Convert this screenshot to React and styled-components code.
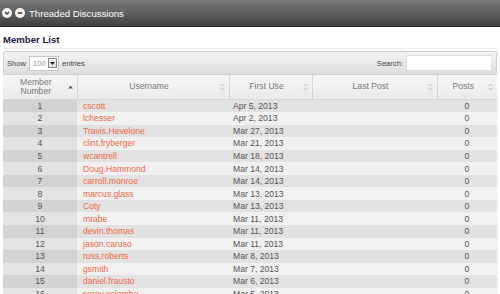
import React from "react";
import styled, { createGlobalStyle } from "styled-components";

const Global = createGlobalStyle`
  html, body { margin: 0; padding: 0; background: #fff; overflow: hidden; }
  body { font-family: "Liberation Sans", Arial, sans-serif; }
`;

const TitleBar = styled.div`
  height: 26px;
  background: linear-gradient(#7a7a7a, #5a5a5a 60%, #3e3e3e);
  display: flex;
  align-items: center;
  padding-left: 2px;
  gap: 3px;
  border-bottom: 1px solid #2e2e2e;
`;

const RoundIcon = styled.span`
  width: 10px;
  height: 10px;
  border-radius: 50%;
  background: #f4f4f4;
  display: inline-flex;
  align-items: center;
  justify-content: center;
  svg { display: block; }
`;

const TitleText = styled.span`
  color: #fff;
  font-size: 9.6px;
  margin-left: 1px;
`;

const Content = styled.div`
  padding: 0 3px;
`;

const Heading = styled.div`
  font-weight: bold;
  font-size: 9.6px;
  color: #1c2236;
  padding: 7px 0 3px 0;
  border-bottom: 1px solid #ececec;
  margin-bottom: 2px;
`;

const Toolbar = styled.div`
  height: 22px;
  border: 1px solid #d2d2d2;
  border-radius: 2px 2px 0 0;
  background: linear-gradient(#f4f4f4, #dedede);
  display: flex;
  align-items: center;
  justify-content: space-between;
  padding: 0 4px 0 3px;
  font-size: 7.6px;
  color: #444;
`;

const Group = styled.div`
  display: flex;
  align-items: center;
  gap: 3px;
`;

const Select = styled.div`
  width: 30px;
  height: 15px;
  background: #fff;
  border: 1px solid #c6c6c6;
  display: flex;
  align-items: center;
  justify-content: space-between;
  padding-left: 3px;
  box-sizing: border-box;
  color: #999;
  font-size: 7.6px;
`;

const SelBtn = styled.span`
  width: 9px;
  height: 10px;
  margin-right: 1px;
  border: 1px solid #888;
  background: linear-gradient(#fff, #ddd);
  box-sizing: border-box;
  display: flex;
  align-items: center;
  justify-content: center;
`;

const SearchBox = styled.div`
  width: 86px;
  height: 16px;
  background: #fff;
  border: 1px solid #e0e0e0;
  box-sizing: border-box;
`;

const Table = styled.table`
  width: 100%;
  border-collapse: collapse;
  table-layout: fixed;
  font-size: 8.6px;
`;

const Th = styled.th`
  height: 24px;
  padding: 0 12px 0 4px;
  font-weight: normal;
  color: #777;
  font-size: 8.6px;
  line-height: 9.5px;
  background: linear-gradient(#f6f6f6, #ebebeb);
  border-right: 1px solid #d4d4d4;
  border-bottom: 1px solid #d8d8d8;
  position: relative;
  text-align: center;
  &:last-child { border-right: none; }
`;

const SortIcon = styled.span`
  position: absolute;
  right: 4px;
  top: 50%;
  transform: translateY(-50%);
  color: #999;
  display: flex;
`;

const Tr = styled.tr`
  height: 12.55px;
  background: ${(p) => (p.$odd ? "#e2e2e2" : "#f1f1f1")};
`;

const Td = styled.td`
  padding: 0 4px;
  white-space: nowrap;
  overflow: hidden;
  color: #555;
  text-align: ${(p) => p.$align || "left"};
  background: ${(p) => (p.$sorted ? (p.$odd ? "#d3d3d3" : "#e3e3e3") : "transparent")};
`;

const Link = styled.a`
  color: #f2683f;
  text-decoration: none;
  padding-left: 2px;
`;

const rows = [
  ["cscott", "Apr 5, 2013"],
  ["lchesser", "Apr 2, 2013"],
  ["Travis.Hevelone", "Mar 27, 2013"],
  ["clint.fryberger", "Mar 21, 2013"],
  ["wcantrell", "Mar 18, 2013"],
  ["Doug.Hammond", "Mar 14, 2013"],
  ["carroll.monroe", "Mar 14, 2013"],
  ["marcus.glass", "Mar 13, 2013"],
  ["Coty", "Mar 13, 2013"],
  ["mrabe", "Mar 11, 2013"],
  ["devin.thomas", "Mar 11, 2013"],
  ["jason.caruso", "Mar 11, 2013"],
  ["russ.roberts", "Mar 8, 2013"],
  ["gsmith", "Mar 7, 2013"],
  ["daniel.frausto", "Mar 6, 2013"],
  ["corey.colombo", "Mar 5, 2013"],
];

const Both = () => (
  <svg width="5" height="7" viewBox="0 0 5 7">
    <path d="M0.5 2.6 L2.5 0.6 L4.5 2.6 M0.5 4.4 L2.5 6.4 L4.5 4.4" fill="none" stroke="#aaa" strokeWidth="0.8" />
  </svg>
);

const Asc = () => (
  <svg width="5" height="4" viewBox="0 0 5 4">
    <path d="M0 3.5 L2.5 0.5 L5 3.5 Z" fill="#666" />
  </svg>
);

export default function App() {
  return (
    <>
      <Global />
      <TitleBar>
        <RoundIcon>
          <svg width="6" height="6" viewBox="0 0 6 6">
            <path d="M1 2 L3 4 L5 2" fill="none" stroke="#444" strokeWidth="1.4" />
          </svg>
        </RoundIcon>
        <RoundIcon>
          <svg width="6" height="6" viewBox="0 0 6 6">
            <path d="M0.8 3 H5.2" stroke="#444" strokeWidth="1.6" />
          </svg>
        </RoundIcon>
        <TitleText>Threaded Discussions</TitleText>
      </TitleBar>
      <Content>
        <Heading>Member List</Heading>
        <Toolbar>
          <Group>
            <span>Show</span>
            <Select>
              100
              <SelBtn>
                <svg width="5" height="3" viewBox="0 0 5 3">
                  <path d="M0 0 L5 0 L2.5 3 Z" fill="#222" />
                </svg>
              </SelBtn>
            </Select>
            <span>entries</span>
          </Group>
          <Group>
            <span>Search:</span>
            <SearchBox />
          </Group>
        </Toolbar>
        <Table>
          <colgroup>
            <col style={{ width: "74px" }} />
            <col style={{ width: "152px" }} />
            <col style={{ width: "83px" }} />
            <col style={{ width: "125px" }} />
            <col />
          </colgroup>
          <thead>
            <tr>
              <Th>Member<br />Number<SortIcon><Asc /></SortIcon></Th>
              <Th>Username<SortIcon><Both /></SortIcon></Th>
              <Th>First Use<SortIcon><Both /></SortIcon></Th>
              <Th>Last Post<SortIcon><Both /></SortIcon></Th>
              <Th>Posts<SortIcon><Both /></SortIcon></Th>
            </tr>
          </thead>
          <tbody>
            {rows.map(([u, d], i) => {
              const odd = i % 2 === 0;
              return (
                <Tr key={i} $odd={odd}>
                  <Td $align="center" $sorted $odd={odd}>{i + 1}</Td>
                  <Td><Link href="#">{u}</Link></Td>
                  <Td>{d}</Td>
                  <Td></Td>
                  <Td $align="center">0</Td>
                </Tr>
              );
            })}
          </tbody>
        </Table>
      </Content>
    </>
  );
}
